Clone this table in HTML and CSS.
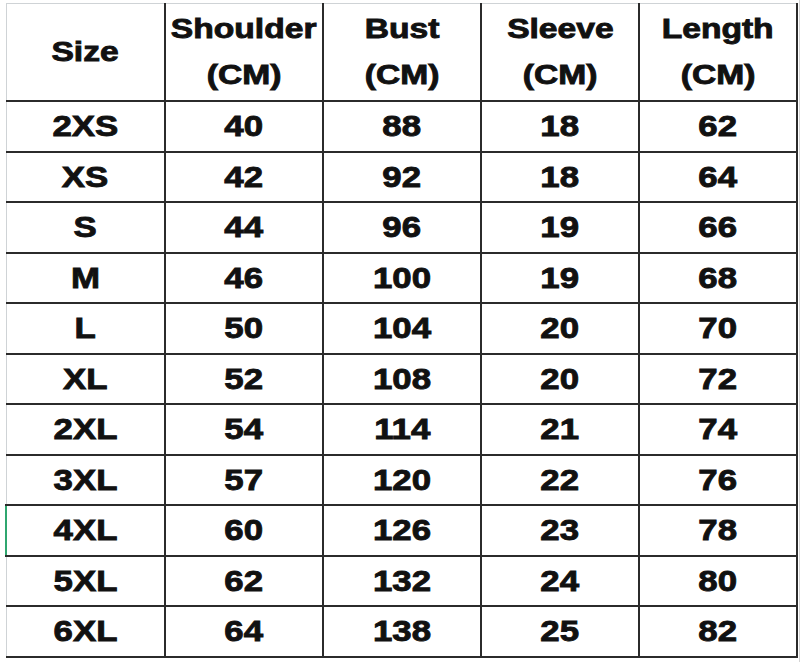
FILE: index.html
```html
<!DOCTYPE html>
<html>
<head>
<meta charset="utf-8">
<link rel="stylesheet" href="styles.css">
</head>
<body>
<div class="sheet">
<table class="size-table">
  <colgroup>
    <col class="c1"><col class="cn"><col class="cn"><col class="cn"><col class="cn">
  </colgroup>
  <thead>
    <tr class="head">
      <th><span class="t">Size</span></th>
      <th><span class="t">Shoulder</span><br><span class="t">(CM)</span></th>
      <th><span class="t">Bust</span><br><span class="t">(CM)</span></th>
      <th><span class="t">Sleeve</span><br><span class="t">(CM)</span></th>
      <th><span class="t">Length</span><br><span class="t">(CM)</span></th>
    </tr>
  </thead>
  <tbody>
    <tr><td><span class="t">2XS</span></td><td><span class="t">40</span></td><td><span class="t">88</span></td><td><span class="t">18</span></td><td><span class="t">62</span></td></tr>
    <tr><td><span class="t">XS</span></td><td><span class="t">42</span></td><td><span class="t">92</span></td><td><span class="t">18</span></td><td><span class="t">64</span></td></tr>
    <tr><td><span class="t">S</span></td><td><span class="t">44</span></td><td><span class="t">96</span></td><td><span class="t">19</span></td><td><span class="t">66</span></td></tr>
    <tr><td><span class="t">M</span></td><td><span class="t">46</span></td><td><span class="t">100</span></td><td><span class="t">19</span></td><td><span class="t">68</span></td></tr>
    <tr><td><span class="t">L</span></td><td><span class="t">50</span></td><td><span class="t">104</span></td><td><span class="t">20</span></td><td><span class="t">70</span></td></tr>
    <tr><td><span class="t">XL</span></td><td><span class="t">52</span></td><td><span class="t">108</span></td><td><span class="t">20</span></td><td><span class="t">72</span></td></tr>
    <tr><td><span class="t">2XL</span></td><td><span class="t">54</span></td><td><span class="t">114</span></td><td><span class="t">21</span></td><td><span class="t">74</span></td></tr>
    <tr><td><span class="t">3XL</span></td><td><span class="t">57</span></td><td><span class="t">120</span></td><td><span class="t">22</span></td><td><span class="t">76</span></td></tr>
    <tr><td class="sel"><span class="t">4XL</span></td><td><span class="t">60</span></td><td><span class="t">126</span></td><td><span class="t">23</span></td><td><span class="t">78</span></td></tr>
    <tr><td><span class="t">5XL</span></td><td><span class="t">62</span></td><td><span class="t">132</span></td><td><span class="t">24</span></td><td><span class="t">80</span></td></tr>
    <tr><td><span class="t">6XL</span></td><td><span class="t">64</span></td><td><span class="t">138</span></td><td><span class="t">25</span></td><td><span class="t">82</span></td></tr>
  </tbody>
</table>
</div>
</body>
</html>
```
FILE: styles.css
```css
html, body {
  margin: 0;
  padding: 0;
  background: #ffffff;
}
.sheet {
  padding: 3px 0 0 5px;
  width: 800px;
  height: 662px;
  box-sizing: border-box;
  overflow: hidden;
  border-right: 1px solid #d4d4d4;
}
.size-table {
  border-collapse: collapse;
  table-layout: fixed;
  width: 792px;
  font-family: "Liberation Sans", Arial, sans-serif;
  font-weight: bold;
  color: #111111;
}
.c1 { width: 159px; }
.cn { width: 158px; }
.size-table th,
.size-table td {
  border: 2px solid #2b2b2b;
  text-align: center;
  vertical-align: middle;
  padding: 0;
}
.size-table th {
  border-top: 1px solid #cfd3d6;
  height: 96px;
  font-size: 28px;
  line-height: 46px;
}
.size-table th .t {
  transform: scaleX(1.2);
}
.size-table td {
  height: 48.5px;
  font-size: 30px;
  line-height: 34px;
}
.size-table th:first-child,
.size-table td:first-child {
  border-left: 1px solid #cfd3d6;
}
.size-table td.sel {
  border-left: 2px solid #2fa66f;
}
.t {
  display: inline-block;
  transform: scaleX(1.16);
  -webkit-text-stroke: 0.9px #111111;
}
```
